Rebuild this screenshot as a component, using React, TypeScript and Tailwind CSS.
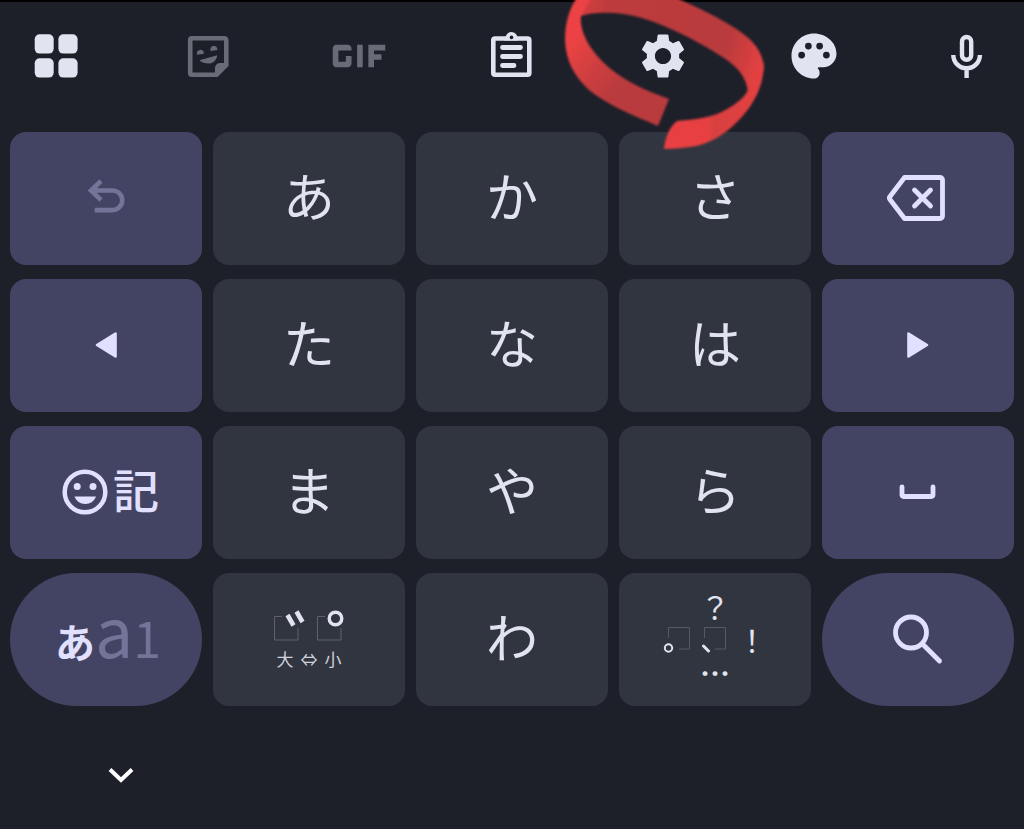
import React from 'react';
import { MdGif, MdSettings } from 'react-icons/md';

type KeyProps = {
  label: string;
  variant?: 'plain' | 'accent' | 'pill';
  disabled?: boolean;
  children: React.ReactNode;
};

const keyStyles = {
  plain: 'rounded-2xl bg-[#31353f] text-[#e1e3f0]',
  accent: 'rounded-2xl bg-[#434464] text-[#e1e0ff]',
  pill: 'rounded-full bg-[#434464] text-[#e1e0ff]',
};

const Key = ({ label, variant = 'plain', disabled, children }: KeyProps) => (
  <button
    type="button"
    aria-label={label}
    disabled={disabled}
    className={`flex h-[133px] items-center justify-center pb-0.5 ${keyStyles[variant]}`}
  >
    {children}
  </button>
);

const KanaKey = ({ kana }: { kana: string }) => (
  <Key label={kana}>
    <span className="pb-1.5 text-[52px] leading-none">{kana}</span>
  </Key>
);

const ToolButton = ({ label, dim, children }: { label: string; dim?: boolean; children: React.ReactNode }) => (
  <button
    type="button"
    aria-label={label}
    className={`relative flex h-12 w-14 items-center justify-center ${dim ? 'text-[#696b77]' : 'text-[#e1e3f0]'}`}
  >
    {children}
  </button>
);

const AppsIcon = () => (
  <svg className="h-12 w-14" viewBox="0 0 56 48" fill="currentColor">
    <rect x="6.7" y="2.2" width="19" height="19.4" rx="5" />
    <rect x="30.4" y="2.2" width="19.2" height="19.4" rx="5" />
    <rect x="6.7" y="26.2" width="19" height="19.4" rx="5" />
    <rect x="30.4" y="26.2" width="19.2" height="19.4" rx="5" />
  </svg>
);

const StickerIcon = () => (
  <svg className="h-12 w-14" viewBox="0 0 56 48" fill="currentColor">
    <path
      d="M12 6.3h32.300a2 2 0 0 1 2 2V33L36.500 42.700H12a1.800 1.800 0 0 1-1.800-1.800V8.100A1.800 1.800 0 0 1 12 6.300Z"
      fill="none"
      stroke="currentColor"
      strokeWidth="4.600"
    />
    <path d="M46 31h-6a5 5 0 0 0-5 5v7h3l8-8z" />
    <path d="M17 22.800v-1a3.400 3.400 0 0 1 6.800-1v1z" />
    <path d="M30.500 19v-1a3.400 3.400 0 0 1 6.800-1v1z" />
    <path d="M19.500 28.300l17.800-5c-1 5.300-4.500 8.300-8.600 8.300-3.700 0-7.200-1-9.200-3.300z" />
  </svg>
);

const ClipboardIcon = () => (
  <svg className="h-12 w-14" viewBox="0 0 56 48" fill="none" stroke="currentColor">
    <rect x="10.300" y="6.500" width="36" height="36.300" rx="1.800" strokeWidth="4.600" />
    <path d="M22.500 6a6 6 0 0 1 12 0l1 2.500h-14z" fill="currentColor" stroke="none" />
    <circle cx="28.500" cy="5.400" r="1.800" fill="#1e2029" stroke="none" />
    <path d="M19.500 15.500h18M19.500 24.500h18M19.500 33.500h11.500" strokeWidth="4.800" strokeLinecap="round" />
  </svg>
);

const PaletteIcon = () => (
  <svg className="h-[54px] w-[54px] shrink-0" viewBox="0 0 24 24" fill="currentColor">
    <path d="M12 2C6.490 2 2 6.490 2 12s4.490 10 10 10c1.380 0 2.500-1.120 2.500-2.500 0-.610-.230-1.200-.640-1.670-.080-.100-.130-.210-.130-.330 0-.280.220-.500.500-.500H16c3.310 0 6-2.690 6-6 0-4.960-4.490-9-10-9z" />
    <g fill="#1e2029">
      <circle cx="6.500" cy="11.600" r="1.500" />
      <circle cx="9.500" cy="7.600" r="1.500" />
      <circle cx="14.500" cy="7.600" r="1.500" />
      <circle cx="17.500" cy="11.600" r="1.500" />
    </g>
  </svg>
);

const MicIcon = () => (
  <svg className="h-12 w-14" viewBox="0 0 56 48" fill="none" stroke="currentColor" strokeWidth="4.400">
    <rect x="24" y="5" width="9.200" height="22.800" rx="4.600" />
    <path d="M15.300 23a13.300 13.300 0 0 0 26.600 0M28.600 36v10" />
  </svg>
);

// Hand-drawn ribbon circling the settings button
const RedCircle = () => (
  <svg
    className="pointer-events-none absolute -top-8 left-1/2 z-10 h-[152px] w-[206px] max-w-none -translate-x-1/2"
    viewBox="560 0 206 152"
    aria-hidden="true"
  >
    <defs>
      <linearGradient id="bandTop" gradientUnits="userSpaceOnUse" x1="572" y1="0" x2="764" y2="60">
        <stop offset="0" stopColor="#e04041" />
        <stop offset="0.18" stopColor="#bd3b3d" />
        <stop offset="0.8" stopColor="#b93a3c" />
        <stop offset="1" stopColor="#e54142" />
      </linearGradient>
      <linearGradient id="bandLeft" gradientUnits="userSpaceOnUse" x1="566" y1="50" x2="630" y2="100">
        <stop offset="0" stopColor="#ec4344" />
        <stop offset="0.35" stopColor="#d23f40" />
        <stop offset="0.8" stopColor="#b93a3c" />
      </linearGradient>
      <linearGradient id="bandRight" gradientUnits="userSpaceOnUse" x1="664" y1="0" x2="764" y2="0">
        <stop offset="0" stopColor="#e84142" />
        <stop offset="0.42" stopColor="#e84142" />
        <stop offset="0.5" stopColor="#d83f40" />
        <stop offset="1" stopColor="#e54142" />
      </linearGradient>
      <filter id="soft" x="-5%" y="-5%" width="110%" height="110%">
        <feGaussianBlur stdDeviation="1.200" />
      </filter>
    </defs>
    <g filter="url(#soft)">
      <path
        d="M576 -4L581 16C596 11 622 12 642 18C670 26 706 46 724 58C738 67 747 78 748 93L757 84C763 76 765 70 763 62C760 46 748 36 730 25C712 14 692 5 672 -4Z"
        fill="url(#bandTop)"
      />
      <path
        d="M578 -4C569 8 565 24 565 40C566 60 573 75 589 90C606 104 632 115 658 126L669 99C650 92 630 84 612 70C592 54 579 33 581 16L592 -4Z"
        fill="url(#bandLeft)"
      />
      <path
        d="M763.500 62C765 84 754 105 738 121C724 136 707 145 690 147C681 148 672 149 664 149C665 139 669 127 677 121C700 119 714 117 727 109C738 103 747 95 748.500 88L754 66Z"
        fill="url(#bandRight)"
      />
    </g>
  </svg>
);

const Toolbar = () => (
  <header className="flex items-center justify-between pt-[30px] pr-[30px] pb-[52px] pl-7">
    <ToolButton label="Apps">
      <AppsIcon />
    </ToolButton>
    <ToolButton label="Stickers" dim>
      <StickerIcon />
    </ToolButton>
    <ToolButton label="GIF" dim>
      <MdGif className="h-[90px] w-[90px] shrink-0" />
    </ToolButton>
    <ToolButton label="Clipboard">
      <ClipboardIcon />
    </ToolButton>
    <ToolButton label="Settings">
      <MdSettings className="h-[54px] w-[54px] shrink-0" />
      <RedCircle />
    </ToolButton>
    <ToolButton label="Themes">
      <PaletteIcon />
    </ToolButton>
    <ToolButton label="Voice input">
      <MicIcon />
    </ToolButton>
  </header>
);

const UndoIcon = () => (
  <svg className="h-12 w-12 text-[#747499]" viewBox="0 0 48 48" fill="none" stroke="currentColor" strokeWidth="4.600">
    <path d="M19 7L9 16.500l10 9.500M9 16.500h21.500a9.800 9.800 0 0 1 0 19.600H12.700" />
  </svg>
);

const BackspaceIcon = () => (
  <svg className="h-12 w-16" viewBox="0 0 64 48" fill="none" stroke="currentColor" strokeWidth="4.800">
    <path d="M18.500 3.500H54a2.500 2.500 0 0 1 2.500 2.500v36a2.500 2.500 0 0 1-2.500 2.500H18.500L3.800 25.200a2 2 0 0 1 0-2.400Z" strokeLinejoin="round" />
    <path d="M28.500 16l16 16M44.500 16l-16 16" strokeLinecap="round" />
  </svg>
);

const Triangle = ({ flip }: { flip?: boolean }) => (
  <svg className={`h-7 w-6 ${flip ? 'rotate-180' : ''}`} viewBox="0 0 24 28" fill="currentColor">
    <path d="M2.500 2.500L21 14L2.500 25.500Z" stroke="currentColor" strokeWidth="2.600" strokeLinejoin="round" />
  </svg>
);

const SmileIcon = () => (
  <svg className="h-12 w-12" viewBox="0 0 48 48" fill="currentColor">
    <circle cx="24" cy="24" r="20.300" fill="none" stroke="currentColor" strokeWidth="4.500" />
    <circle cx="16.200" cy="18.500" r="3.500" />
    <circle cx="32" cy="18.500" r="3.500" />
    <path d="M13.500 28.500h21.500c-1.500 4.500-5.700 7.500-10.700 7.500s-9.300-3-10.800-7.500z" />
  </svg>
);

const SpaceIcon = () => (
  <svg className="h-4 w-10" viewBox="0 0 40 16" fill="none" stroke="currentColor" strokeWidth="4.800" strokeLinecap="round" strokeLinejoin="round">
    <path d="M4 3v8a1.500 1.500 0 0 0 1.500 1.500h28a1.500 1.500 0 0 0 1.500-1.500V3" />
  </svg>
);

const SearchIcon = () => (
  <svg className="h-[52px] w-[52px]" viewBox="0 0 52 52" fill="none" stroke="currentColor" strokeWidth="4.800" strokeLinecap="round">
    <circle cx="19" cy="19.500" r="15.500" />
    <path d="M31 31.500L47.500 48" />
  </svg>
);

const MarksIcon = () => (
  <svg className="h-8 w-[72px]" viewBox="0 0 72 32" fill="none" stroke="currentColor">
    <path d="M9 6.500H1.500v23.500H25v-12M52 6.500h-7.500v23.500H68v-12" stroke="#5f626c" />
    <path d="M14.500 5l6 10.500M23.500 1.500l6 10.500" strokeWidth="4.600" />
    <circle cx="62.500" cy="8.500" r="6.300" strokeWidth="3.400" />
  </svg>
);

const KutenIcon = () => (
  <svg className="h-7 w-9" viewBox="0 0 36 28" fill="none" stroke="currentColor">
    <path d="M8.500 13V2.500h21V24H19" stroke="#575a64" />
    <circle cx="8.500" cy="23" r="3.700" strokeWidth="2" />
  </svg>
);

const ToutenIcon = () => (
  <svg className="h-7 w-9" viewBox="0 0 36 28" fill="none" stroke="currentColor">
    <path d="M7.500 13V2.500h21V24H18" stroke="#575a64" />
    <path d="M6.500 21l5 5" strokeWidth="3" strokeLinecap="round" />
  </svg>
);

const App = () => {
  return (
    <div className="flex min-h-screen flex-col border-t-2 border-black bg-[#1e2029] font-['Noto_Sans_CJK_JP',sans-serif]">
      <Toolbar />

      {/* Flick keys */}
      <main className="grid grid-cols-5 gap-x-[11px] gap-y-[14px] px-[10px]">
        <Key label="Undo" variant="accent" disabled>
          <UndoIcon />
        </Key>
        <KanaKey kana="あ" />
        <KanaKey kana="か" />
        <KanaKey kana="さ" />
        <Key label="Backspace" variant="accent">
          <BackspaceIcon />
        </Key>

        <Key label="Move left" variant="accent">
          <Triangle flip />
        </Key>
        <KanaKey kana="た" />
        <KanaKey kana="な" />
        <KanaKey kana="は" />
        <Key label="Move right" variant="accent">
          <Triangle />
        </Key>

        <Key label="Emoji and symbols" variant="accent">
          <span className="flex items-center gap-1 pl-2">
            <SmileIcon />
            <span className="pb-2 text-[46px] leading-none font-medium">記</span>
          </span>
        </Key>
        <KanaKey kana="ま" />
        <KanaKey kana="や" />
        <KanaKey kana="ら" />
        <Key label="Space" variant="accent">
          <SpaceIcon />
        </Key>

        <Key label="Switch input mode" variant="pill">
          <span className="flex items-baseline pb-5 pl-1 leading-none">
            <span className="text-[40px] leading-none font-bold">あ</span>
            <span className="text-[68px] leading-none text-[#747499]">a</span>
            <span className="text-[50px] leading-none text-[#747499]">1</span>
          </span>
        </Key>
        <Key label="Voiced marks and small kana">
          <span className="flex flex-col items-center gap-2">
            <MarksIcon />
            <span className="flex gap-[7px] text-[17px] leading-none text-[#d0d2de]">
              <span>大</span>
              <span>⇔</span>
              <span>小</span>
            </span>
          </span>
        </Key>
        <KanaKey kana="わ" />
        <Key label="Punctuation">
          <span className="grid grid-cols-[repeat(3,37px)] grid-rows-[repeat(3,33px)] place-items-center text-[30px] leading-none">
            <span className="col-start-2">？</span>
            <span className="col-start-1">
              <KutenIcon />
            </span>
            <ToutenIcon />
            <span>！</span>
            <span className="col-start-2 font-bold">…</span>
          </span>
        </Key>
        <Key label="Search" variant="pill">
          <SearchIcon />
        </Key>
      </main>

      <footer className="pt-[45px] pl-[97px]">
        <button type="button" aria-label="Hide keyboard" className="flex h-12 w-12 items-center justify-center text-white">
          <svg className="h-5 w-7" viewBox="0 0 28 20" fill="none" stroke="currentColor" strokeWidth="4">
            <path d="M3 4.500l11 10.500L25 4.500" />
          </svg>
        </button>
      </footer>
    </div>
  );
};

export default App;
